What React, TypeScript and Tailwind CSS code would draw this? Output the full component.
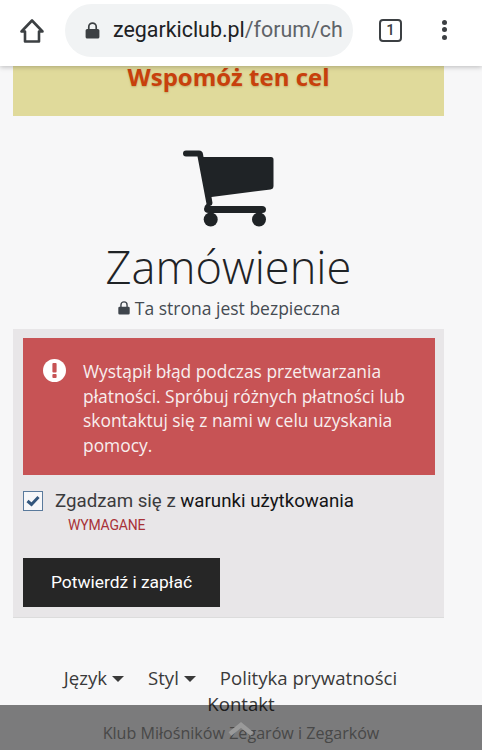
const sans = "font-['Open_Sans',sans-serif]";

const HomeIcon = () => (
    <svg width="26" height="26" viewBox="0 0 26 26" fill="none" stroke="#3c4043" strokeWidth="2.6" strokeLinejoin="round">
        <path d="M13 2.5 L2.5 13.5 H6 V23.5 H20 V13.5 H23.5 Z" />
    </svg>
);

const LockIcon = ({ size, color }: { size: number; color: string }) => (
    <svg width={size} height={size} viewBox="0 0 14 16" fill={color}>
        <path d="M2 6.5 h10 a1.5 1.5 0 0 1 1.5 1.5 v6 a1.5 1.5 0 0 1 -1.5 1.5 h-10 a1.5 1.5 0 0 1 -1.5 -1.5 v-6 a1.5 1.5 0 0 1 1.5 -1.5 z" />
        <path d="M3.5 7 V4.5 a3.5 3.5 0 0 1 7 0 V7" fill="none" stroke={color} strokeWidth="1.6" />
    </svg>
);

const CartIcon = () => (
    <svg width="92" height="78" viewBox="0 0 92 78" fill="#1f2326" className="block">
        <path d="M3 0.5 H16 Q19.5 0.5 20 4 L20.5 7 H88 Q90.5 7 90.5 9.5 V36 Q90.5 39 87.5 39.5 L28.5 47 L29.5 53 Q29.5 55.5 27 56 H79 Q83 56 83 59.5 Q83 63 79 63 H26 Q21 63 21 59 Q21 56 23.5 54 L14.5 6.5 H3 Q0 6.5 0 3.5 Q0 0.5 3 0.5 Z" />
        <circle cx="27.7" cy="69.5" r="7" />
        <circle cx="76" cy="69.5" r="7" />
    </svg>
);

const Caret = () => <span className="ml-[5px] inline-block w-0 h-0 border-x-[6px] border-x-transparent border-t-[6px] border-t-[#3a3a3a] align-middle mb-[3px]" />;

export default function App() {
    return (
        <div className={`relative h-[750px] w-[482px] overflow-hidden bg-[#f7f7f8] ${sans}`}>
            <header className="relative z-10 flex h-[66px] items-center bg-white shadow-[0_1px_5px_rgba(0,0,0,0.25)]">
                <div className="ml-[19px] mb-[5px] flex w-[26px]"><HomeIcon /></div>
                <div className="ml-[20px] mb-[5px] flex h-[53px] w-[288px] items-center overflow-hidden rounded-full bg-[#f1f3f4] pl-[19px]">
                    <LockIcon size={17} color="#3c4043" />
                    <div className="ml-[12px] whitespace-nowrap font-['Roboto',sans-serif] text-[21.4px] text-[#5f6368]">
                        <span className="text-[#202124]">zegarkiclub.pl</span>/forum/ch
                    </div>
                </div>
                <div className="ml-[26px] mb-[5px] flex h-[23px] w-[23px] items-center justify-center rounded-[4px] border-[2.5px] border-[#3c4043] font-['Roboto',sans-serif] text-[15px] font-medium text-[#3c4043]">1</div>
                <div className="ml-[40px] mb-[7px] flex flex-col gap-[2.5px]">
                    <span className="h-[5px] w-[5px] rounded-full bg-[#3c4043]" />
                    <span className="h-[5px] w-[5px] rounded-full bg-[#3c4043]" />
                    <span className="h-[5px] w-[5px] rounded-full bg-[#3c4043]" />
                </div>
            </header>

            <div className="ml-[13px] w-[431px]">
                <div className="flex h-[50px] justify-center bg-[#e0da9b] text-[24px] font-bold leading-[21px] text-[#c8400c] [text-shadow:0_1px_2px_rgba(120,80,0,0.3)]">
                    Wspomóż ten cel
                </div>

                <div className="mt-[34px] flex justify-center pl-[1px]"><CartIcon /></div>
                <h1 className="mt-[9px] text-center text-[45.2px] font-light leading-[60px] text-[#1f2326]">Zamówienie</h1>
                <div className="flex items-center justify-center gap-[4px] text-[17.5px] leading-[22px] text-[#454b52]">
                    <LockIcon size={14} color="#3f454c" />
                    Ta strona jest bezpieczna
                </div>

                <div className="mt-[10px] h-[289px] border-b border-[#dcdcdc] bg-[#e8e6e8] pb-[9px] pl-[10px] pr-[9px] pt-[9px]">
                    <div className="flex h-[137px] items-start bg-[#c75355] px-[20px] pt-[21px] text-[17.4px] leading-[24.5px] text-[#f8eeee]">
                        <svg width="23" height="23" viewBox="0 0 23 23" className="shrink-0">
                            <circle cx="11.5" cy="11.5" r="11.5" fill="#fff" />
                            <rect x="9.4" y="4" width="4.2" height="9.5" rx="1" fill="#c75355" />
                            <rect x="9.4" y="15" width="4.2" height="4" rx="1" fill="#c75355" />
                        </svg>
                        <p className="ml-[17px]">Wystąpił błąd podczas przetwarzania płatności. Spróbuj różnych płatności lub skontaktuj się z nami w celu uzyskania pomocy.</p>
                    </div>

                    <div className="mt-[16px] flex items-center font-['Roboto',sans-serif]">
                        <div className="flex h-[20px] w-[20px] items-center justify-center border-[1.5px] border-[#5a7a9c] bg-[#f7f7f9]">
                            <svg width="14" height="12" viewBox="0 0 14 12" fill="none" stroke="#33567d" strokeWidth="3">
                                <path d="M1.5 6 L5.5 9.5 L12.5 2" />
                            </svg>
                        </div>
                        <div className="ml-[12px] text-[18.7px] leading-[20px] text-[#3b3b3d]">
                            Zgadzam się z <span className="text-[#141416]">warunki użytkowania</span>
                        </div>
                    </div>
                    <div className="ml-[45px] mt-[5px] font-['Roboto',sans-serif] text-[14px] leading-[18px] tracking-[-0.2px] text-[#a83238]">WYMAGANE</div>

                    <button className="mt-[24px] flex h-[49px] w-[197px] items-center justify-center bg-[#262626] font-['Roboto',sans-serif] text-[17.4px] text-white">
                        Potwierdź i zapłać
                    </button>
                </div>
            </div>

            <div className="mt-[47px] text-[18.6px] leading-[26px] text-[#3a3a3a]">
                <div className="flex justify-center gap-[24px] pl-[1px] pr-[22px]">
                    <span>Język<Caret /></span>
                    <span>Styl<Caret /></span>
                    <span>Polityka prywatności</span>
                </div>
                <div className="text-center">Kontakt</div>
                <div className="mt-[3px] text-center text-[16.1px] leading-[26px] text-[#909090]">Klub Miłośników Zegarów i Zegarków</div>
            </div>

            <div className="absolute bottom-0 left-0 flex h-[45px] w-full justify-center bg-[#000]/50">
                <svg width="26" height="14" viewBox="0 0 26 14" fill="none" stroke="#9a9a9a" strokeWidth="4.5" className="mt-[17px]">
                    <path d="M2 12 L13 3 L24 12" />
                </svg>
            </div>
        </div>
    );
}
